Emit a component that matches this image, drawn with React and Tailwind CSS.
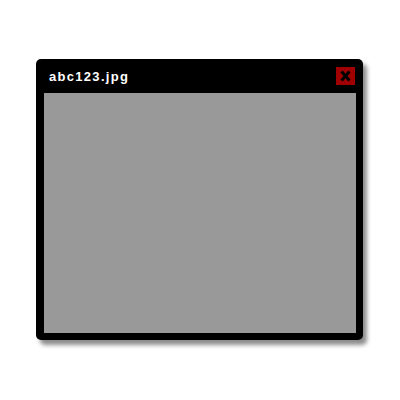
import React from 'react'

const App = () => {
  return (
    <div className="w-[400px] h-[400px] bg-white pt-[59px] pl-[36px]">
      <div className="w-[327px] h-[281px] bg-black rounded-[5px] flex flex-col pl-[8px] pr-[7px] pb-[7px] shadow-[4px_5px_4px_rgba(0,0,0,0.45)]">
        <div className="h-[34px] flex items-center justify-between pl-[5px] pr-[1px]">
          <span
            className="text-white text-[13px] font-bold leading-none tracking-[1.3px]"
            style={{ fontFamily: '"Liberation Sans", Arial, sans-serif' }}
          >
            abc123.jpg
          </span>
          <div className="w-[19px] h-[18px] bg-[#a00000] flex items-center justify-center">
            <svg width="13" height="12" viewBox="0 0 13 12">
              <path d="M2.5 1.5 L10.5 10.5 M10.5 1.5 L2.5 10.5" stroke="#000" strokeWidth="3" strokeLinecap="butt" />
            </svg>
          </div>
        </div>
        <div className="flex-1 bg-[#999999]" />
      </div>
    </div>
  )
}

export default App
